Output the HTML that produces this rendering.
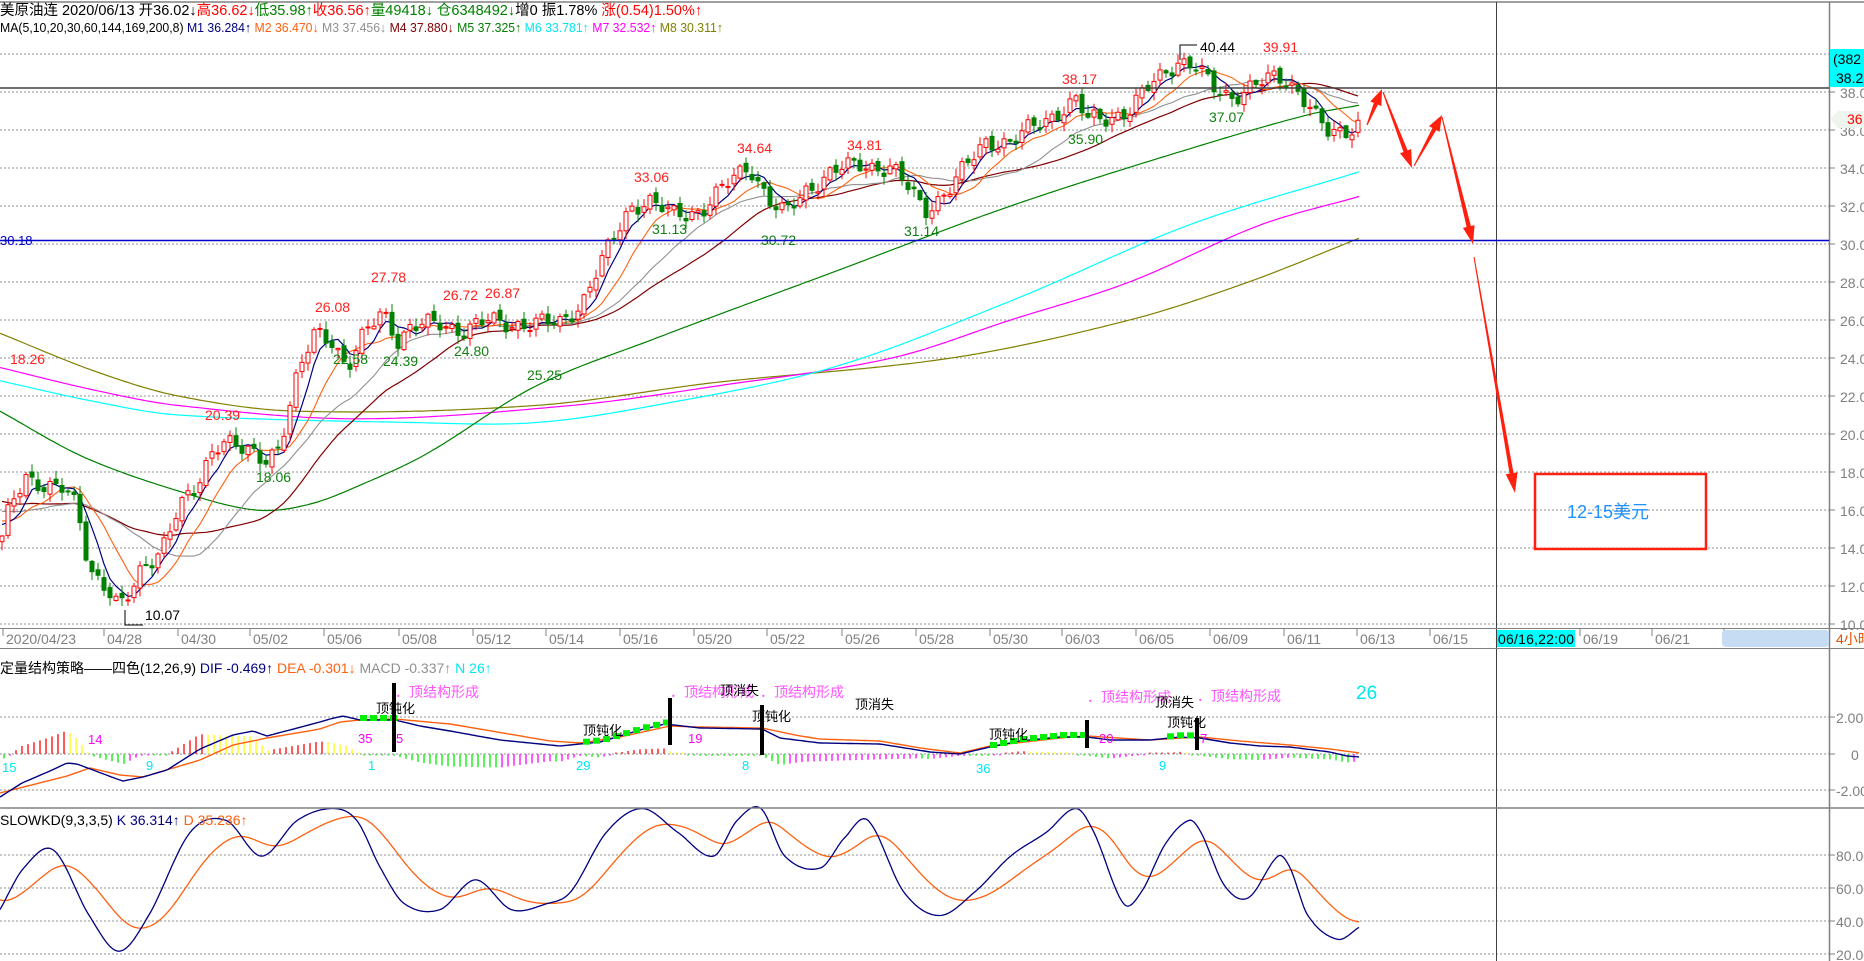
<!DOCTYPE html>
<html><head><meta charset="utf-8">
<style>
html,body{margin:0;padding:0;background:#fff;width:1864px;height:961px;overflow:hidden}
svg{display:block}
text{font-family:"Liberation Sans","Noto Sans CJK SC",sans-serif}
</style></head><body>
<svg id="s" width="1864" height="961" xmlns="http://www.w3.org/2000/svg">
<rect width="1864" height="961" fill="#fff"/>
<g id="grid"></g>
<g id="ma"></g>
<g id="cd"></g>
<g id="ov"></g>
<line x1="0" y1="2" x2="1864" y2="2" stroke="#808080" stroke-width="1.5"/>
<line x1="1496.5" y1="2" x2="1496.5" y2="961" stroke="#404040" stroke-width="1"/>
<line x1="1829.5" y1="2" x2="1829.5" y2="961" stroke="#808080" stroke-width="1.5"/>
<line x1="0" y1="628.5" x2="1864" y2="628.5" stroke="#808080"/>
<line x1="0" y1="648.5" x2="1864" y2="648.5" stroke="#808080"/>
<line x1="0" y1="808" x2="1864" y2="808" stroke="#808080" stroke-width="1.5"/>
<line x1="0" y1="88" x2="1829" y2="88" stroke="#404040" stroke-width="1.5"/>
<line x1="0" y1="240.5" x2="1829" y2="240.5" stroke="#0000cc" stroke-width="1.5"/>
<text x="0" y="245" font-size="13" fill="#0000cc">30.18</text>

<text x="0" y="15" font-size="14.5" fill="#000">美原油连 2020/06/13 开36.02<tspan>↓</tspan><tspan fill="#ff0000">高36.62↓</tspan><tspan fill="#008000">低35.98↑</tspan><tspan fill="#ff0000">收36.56↑</tspan><tspan fill="#008000">量49418↓ 仓6348492↓</tspan>增0 振1.78% <tspan fill="#ff0000">涨(0.54)1.50%↑</tspan></text>
<text x="0" y="32" font-size="13" fill="#000" textLength="723" lengthAdjust="spacingAndGlyphs">MA(5,10,20,30,60,144,169,200,8)<tspan fill="#000080"> M1 36.284↑</tspan><tspan fill="#ff6010"> M2 36.470↓</tspan><tspan fill="#909090"> M3 37.456↓</tspan><tspan fill="#800000"> M4 37.880↓</tspan><tspan fill="#008000"> M5 37.325↑</tspan><tspan fill="#00e8f0"> M6 33.781↑</tspan><tspan fill="#ff00ff"> M7 32.532↑</tspan><tspan fill="#808000"> M8 30.311↑</tspan></text>
<text x="0" y="673" font-size="14" fill="#000">定量结构策略——四色(12,26,9)<tspan fill="#000080">  DIF -0.469↑</tspan><tspan fill="#ff6010">  DEA -0.301↓</tspan><tspan fill="#909090">  MACD -0.337↑</tspan><tspan fill="#00e8f0">  N 26↑</tspan></text>
<text x="0" y="825" font-size="14" fill="#000">SLOWKD(9,3,3,5)<tspan fill="#000080">   K 36.314↑</tspan><tspan fill="#ff6010">   D 35.236↑</tspan></text>

<g font-size="14" fill="#808080" id="ax"></g>
<rect x="1830" y="49" width="34" height="38" fill="#00ffff"/>
<text x="1833" y="64" font-size="14" fill="#000">(382</text>
<text x="1836" y="83" font-size="14" fill="#000">38.2</text>
<polygon points="1830,119 1838,111 1864,111 1864,128 1838,128" fill="#eef5ee"/>
<text x="1847" y="124" font-size="14" fill="#ff0000">36</text>

<g font-size="14" fill="#808080" id="dx"></g>
<rect x="1497" y="630" width="78" height="17" fill="#00ffff"/>
<text x="1498" y="644" font-size="14" fill="#000" textLength="76">06/16,22:00</text>
<rect x="1722" y="630" width="107" height="17" rx="4" fill="#c6dcf2"/>
<text x="1836" y="644" font-size="14" fill="#e05000">4小时</text>

<g fill="#ff2010" stroke="none" id="arr"></g>
<rect x="1535" y="474" width="171" height="75" fill="none" stroke="#ff2010" stroke-width="2.5"/>
<text x="1567" y="518" font-size="18" fill="#1e90ff">12-15美元</text>

<g id="ann"></g>
</svg>
<script>
(function(){
var NS="http://www.w3.org/2000/svg",S=1.189;
function el(p,t,a,txt){var e=document.createElementNS(NS,t);for(var k in a)e.setAttribute(k,a[k]);if(txt!=null)e.textContent=txt;document.getElementById(p).appendChild(e);return e;}
function interp(pts,x){if(x<=pts[0][0])return pts[0][1];for(var i=1;i<pts.length;i++){if(x<=pts[i][0]){var a=pts[i-1],b=pts[i];return a[1]+(b[1]-a[1])*(x-a[0])/(b[0]-a[0]);}}return pts[pts.length-1][1];}
function smooth(pts,x){var n=pts.length;if(x<=pts[0][0])return pts[0][1];if(x>=pts[n-1][0])return pts[n-1][1];
 for(var i=1;i<n;i++){if(x<=pts[i][0]){var p1=pts[i-1],p2=pts[i],p0=pts[Math.max(0,i-2)],p3=pts[Math.min(n-1,i+1)];
 var t=(x-p1[0])/(p2[0]-p1[0]);var m1=(p2[1]-p0[1])/(p2[0]-p0[0])*(p2[0]-p1[0]),m2=(p3[1]-p1[1])/(p3[0]-p1[0])*(p2[0]-p1[0]);
 var t2=t*t,t3=t2*t;return (2*t3-3*t2+1)*p1[1]+(t3-2*t2+t)*m1+(-2*t3+3*t2)*p2[1]+(t3-t2)*m2;}}}
function Y(p){return 92+(38-p)*19;}
for(var p=10;p<=40;p+=2){el("grid","line",{x1:0,x2:1829,y1:Y(p),y2:Y(p),stroke:"#909090","stroke-dasharray":"2,2","stroke-width":1});
 el("ax","line",{x1:1830,x2:1835,y1:Y(p),y2:Y(p),stroke:"#808080"});
 if(p<40)el("ax","text",{x:1840,y:Y(p)+6},p.toFixed(2));}
[717,754,790,855,888,921,954].forEach(function(y){el("grid","line",{x1:0,x2:1829,y1:y,y2:y,stroke:"#909090","stroke-dasharray":"2,2"});el("ax","line",{x1:1830,x2:1835,y1:y,y2:y,stroke:"#808080"});});
el("ax","text",{x:1836,y:723},"2.00");el("ax","text",{x:1851,y:760},"0");el("ax","text",{x:1836,y:796},"-2.00");
el("ax","text",{x:1836,y:861},"80.00");el("ax","text",{x:1836,y:894},"60.00");el("ax","text",{x:1836,y:927},"40.00");el("ax","text",{x:1836,y:960},"20.00");
var ds=[[6,"2020/04/23"],[107,"04/28"],[181,"04/30"],[253,"05/02"],[327,"05/06"],[402,"05/08"],[476,"05/12"],[549,"05/14"],[623,"05/16"],[697,"05/20"],[770,"05/22"],[845,"05/26"],[919,"05/28"],[993,"05/30"],[1065,"06/03"],[1139,"06/05"],[1213,"06/09"],[1287,"06/11"],[1360,"06/13"],[1433,"06/15"],[1583,"06/19"],[1655,"06/21"],[1727,"06/23"]];
ds.forEach(function(d){el("dx","line",{x1:d[0]-3,x2:d[0]-3,y1:629,y2:636,stroke:"#808080"});el("dx","text",{x:d[0],y:644},d[1]);});
var kp=[[0,14],[8,16],[22,17.8],[40,17.3],[55,17],[65,16],[75,13],[90,12],[100,10.8],[110,11.5],[120,13],[135,14],[150,16],[165,17],[180,19.5],[190,19.8],[205,19],[222,18.6],[235,19.5],[250,23],[265,25.3],[280,25],[292,23.5],[305,25],[322,26.5],[335,25],[345,25.6],[370,25.8],[390,25.5],[410,25.9],[440,25.8],[470,25.8],[490,27],[510,29.5],[530,32],[545,32.3],[565,31.5],[590,31.8],[610,33],[630,34.2],[650,32],[660,31.5],[680,33],[700,33.8],[725,34.2],[750,34],[765,32.8],[778,31.8],[800,33],[830,35.5],[850,35.3],[870,36.2],[890,37],[905,37.5],[915,36.5],[930,36.7],[950,37],[970,38.5],[990,39.7],[1005,39.3],[1020,38.2],[1035,37.8],[1055,38.3],[1075,38.8],[1090,38.3],[1100,37.4],[1108,36.5],[1118,35.7],[1130,35.9],[1143,36.5]];
kp=kp.map(function(a){return [a[0]*S,a[1]];});
var step=6,N=Math.floor(1359/step)+1,xs=[],C=[],O=[],H=[],L=[];
var pre=[];for(var i=0;i<30;i++)pre.push(18-i*0.1+0.4*Math.sin(i));
for(var i=0;i<N;i++){var x=2+i*step;xs.push(x);var c=interp(kp,x)+0.35*Math.sin(i*1.7)+0.25*Math.sin(i*0.63+1);
 var o=i==0?c-0.3:C[i-1]+0.15*Math.sin(i*2.9);var hh=Math.max(o,c)+Math.abs(0.4*Math.sin(i*2.3))+0.05;var ll=Math.min(o,c)-Math.abs(0.4*Math.cos(i*1.9))-0.05;
 C.push(c);O.push(o);H.push(hh);L.push(ll);}
var all=pre.concat(C);
function sma(n){var r=[];for(var i=0;i<N;i++){var s=0,k=i+30;for(var j=0;j<n;j++)s+=all[Math.max(0,k-j)];r.push(s/n);}return r;}
function poly(arr,col,w){var d="";for(var i=0;i<arr.length;i++)d+=(i?"L":"M")+xs[i].toFixed(1)+","+Y(arr[i]).toFixed(1);el("ma","path",{d:d,fill:"none",stroke:col,"stroke-width":w||1});}
function kpoly(pts,col){var d="";for(var x=0;x<=1143;x+=3){d+=(x?"L":"M")+(x*S).toFixed(1)+","+Y(smooth(pts,x)).toFixed(1);}el("ma","path",{d:d,fill:"none",stroke:col,"stroke-width":1.2});}
kpoly([[0,25.3],[80,23.3],[150,22],[250,21.2],[450,21.5],[600,22.7],[800,24],[950,26],[1050,28],[1143,30.3]],"#808000");
kpoly([[0,23.5],[80,22.3],[150,21.5],[300,20.8],[480,21.5],[600,22.5],[750,24],[850,26],[950,28],[1060,31],[1143,32.5]],"#ff00ff");
kpoly([[0,22.8],[80,21.7],[150,21],[350,20.6],[450,20.6],[550,21.5],[700,23.5],[850,27],[1000,31],[1143,33.8]],"#00ffff");
kpoly([[0,21.2],[70,18.8],[150,17],[215,16],[260,16.3],[310,17.5],[360,19],[450,22.5],[550,25],[700,28.5],[850,32],[1000,35],[1100,36.8],[1143,37.3]],"#008000");
poly(sma(30),"#800000",1.2);poly(sma(20),"#909090",1.1);poly(sma(10),"#ff6010",1.1);poly(sma(5),"#000080",1.2);
for(var i=0;i<N;i++){var up=C[i]>=O[i],col=up?"#ff0000":"#008000",x=xs[i];
 el("cd","line",{x1:x,x2:x,y1:Y(H[i]),y2:Y(L[i]),stroke:col,"stroke-width":1});
 var yt=Y(Math.max(O[i],C[i])),yb=Y(Math.min(O[i],C[i]));if(yb-yt<1)yb=yt+1;
 el("cd","rect",{x:x-2,y:yt,width:4,height:yb-yt,fill:up?"#fff":"#008000",stroke:col,"stroke-width":1});}
var lb=[[10,364,"18.26","r"],[205,420,"20.39","r"],[256,482,"18.06","g"],[315,312,"26.08","r"],[333,364,"22.58","g"],[371,282,"27.78","r"],[383,366,"24.39","g"],[443,300,"26.72","r"],[485,298,"26.87","r"],[454,356,"24.80","g"],[527,380,"25.25","g"],[634,182,"33.06","r"],[652,234,"31.13","g"],[737,153,"34.64","r"],[761,245,"30.72","g"],[847,150,"34.81","r"],[904,236,"31.14","g"],[1062,84,"38.17","r"],[1068,144,"35.90","g"],[1200,52,"40.44","k"],[1209,122,"37.07","g"],[1263,52,"39.91","r"],[145,620,"10.07","k"]];
lb.forEach(function(l){el("ov","text",{x:l[0],y:l[1],"font-size":14,fill:l[3]=="r"?"#ff2020":(l[3]=="g"?"#108010":"#000")},l[2]);});
el("ov","path",{d:"M125,610V625H143",stroke:"#000",fill:"none"});
el("ov","path",{d:"M1180,60V45H1197",stroke:"#000",fill:"none"});
function arrow(x1,y1,x2,y2,w,hl,hw){var dx=x2-x1,dy=y2-y1,l=Math.sqrt(dx*dx+dy*dy),ux=dx/l,uy=dy/l,px=-uy,py=ux;
 var bx=x2-ux*hl,by=y2-uy*hl;
 var pts=[[x1+px*0.5,y1+py*0.5],[bx+px*w,by+py*w],[bx+px*hw,by+py*hw],[x2,y2],[bx-px*hw,by-py*hw],[bx-px*w,by-py*w],[x1-px*0.5,y1-py*0.5]];
 el("arr","polygon",{points:pts.map(function(p){return p[0].toFixed(1)+","+p[1].toFixed(1);}).join(" ")});}
arrow(1367,125,1382,89,2.2,16,6);
arrow(1383,92,1412,168,2.2,18,6);
arrow(1414,166,1442,115,2.2,16,6);
arrow(1442,117,1473,244,2.2,18,6);
arrow(1474,257,1515,493,2,20,6);
var dif=[[0,797],[22,783],[50,771],[67,763],[77,764],[117,779],[123,781],[143,777],[167,770],[200,749],[233,735],[253,731],[267,736],[320,722],[330,719],[343,716],[360,720],[395,720],[420,726],[450,731],[500,740],[560,746],[580,744],[600,742],[640,730],[665,724],[700,728],[762,729],[780,738],[820,743],[880,744],[930,752],[960,754],[990,747],[1020,741],[1060,737],[1087,737],[1110,740],[1150,740],[1180,737],[1200,738],[1230,743],[1260,746],[1290,747],[1330,752],[1347,756],[1360,757]];
var dea=[[0,793],[67,776],[90,768],[120,775],[143,777],[200,760],[233,745],[267,738],[320,729],[340,722],[360,720],[395,719],[450,724],[550,741],[580,743],[620,737],[670,726],[700,727],[762,728],[800,736],[820,739],[880,741],[920,748],[960,753],[990,746],[1060,738],[1087,736],[1150,740],[1200,737],[1240,741],[1290,745],[1330,749],[1360,753]];
var pv=0;
for(var x=4;x<=1358;x+=6){var v=(interp(dea,x)-interp(dif,x))*1.8;var col;
 if(v>=0)col=(v>=pv?"#ff0000":"#ffff00");else col=(v<=pv?"#00ee00":"#ff00ff");
 var h=Math.max(Math.abs(v),1.5);el("ma","line",{x1:x,x2:x,y1:754,y2:v>=0?754-h:754+h,stroke:col,"stroke-width":1.3});pv=v;}
function lp(pts,col){var d="";for(var x=0;x<=1360;x+=3)d+=(x?"L":"M")+x+","+interp(pts,x).toFixed(1);el("ma","path",{d:d,fill:"none",stroke:col,"stroke-width":1.4});}
lp(dea,"#ff6010");lp(dif,"#000080");
[[360,395],[583,668],[990,1087],[1167,1197]].forEach(function(r){for(var x=r[0];x<r[1];x+=10){el("ma","rect",{x:x,y:interp(dif,x)-5,width:7,height:6,fill:"#00ee00"});}});
function tx(x,y,s,c,fs){el("ann","text",{x:x,y:y,"font-size":fs||13,fill:c},s);}
[[394,683,752],[670,698,745],[762,705,755],[1087,720,748],[1197,718,750]].forEach(function(b){el("ann","rect",{x:b[0]-2,y:b[1],width:4,height:b[2]-b[1],fill:"#000"});});
var M="#ff55ff";
tx(395,697,"．顶结构形成",M,14);tx(670,697,"．顶结构形成",M,14);tx(760,697,"．顶结构形成",M,14);tx(1087,702,"．顶结构形成",M,14);tx(1197,701,"．顶结构形成",M,14);
tx(376,713,"顶钝化","#000");tx(583,735,"顶钝化","#000");tx(752,721,"顶钝化","#000");tx(989,739,"顶钝化","#000");tx(1167,727,"顶钝化","#000");
tx(720,695,"顶消失","#000");tx(855,709,"顶消失","#000");tx(1155,707,"顶消失","#000");
tx(358,743,"35","#ff00ff");tx(396,743,"5","#ff00ff");tx(688,743,"19","#ff00ff");tx(1099,743,"20","#ff00ff");tx(1200,743,"7","#ff00ff");tx(88,744,"14","#ff00ff");
tx(368,770,"1","#00e8f0");tx(576,770,"29","#00e8f0");tx(742,770,"8","#00e8f0");tx(976,773,"36","#00e8f0");tx(1159,770,"9","#00e8f0");tx(2,772,"15","#00e8f0");tx(146,770,"9","#00e8f0");
tx(1356,699,"26","#00e8f0",19);
var K=[[0,765],[20,730],[45,715],[75,770],[100,800],[125,770],[160,700],[190,690],[220,720],[250,690],[280,680],[300,690],[320,730],[340,760],[370,765],[400,740],[430,765],[460,760],[480,750],[510,700],[540,680],[570,700],[600,720],[620,690],[640,680],[660,720],[690,730],[710,705],[730,690],[760,750],[790,770],[820,750],[850,720],[880,700],[905,680],[920,700],[945,760],[960,750],[980,710],[1000,690],[1010,700],[1030,745],[1050,755],[1075,720],[1085,730],[1100,770],[1125,790],[1143,780]];
var kd="",dd="",dv=null;
for(var x=0;x<=1143;x+=1){var kv=smooth(K,x)*S;if(dv==null)dv=kv-10;dv+=(kv-dv)*0.035;
 var kyv=Math.min(kv,962);kd+=(x?"L":"M")+(x*S).toFixed(1)+","+kyv.toFixed(1);dd+=(x?"L":"M")+(x*S).toFixed(1)+","+dv.toFixed(1);}
el("ma","path",{d:dd,fill:"none",stroke:"#ff6010","stroke-width":1.3});
el("ma","path",{d:kd,fill:"none",stroke:"#000080","stroke-width":1.3});
})();
</script>
</body></html>
